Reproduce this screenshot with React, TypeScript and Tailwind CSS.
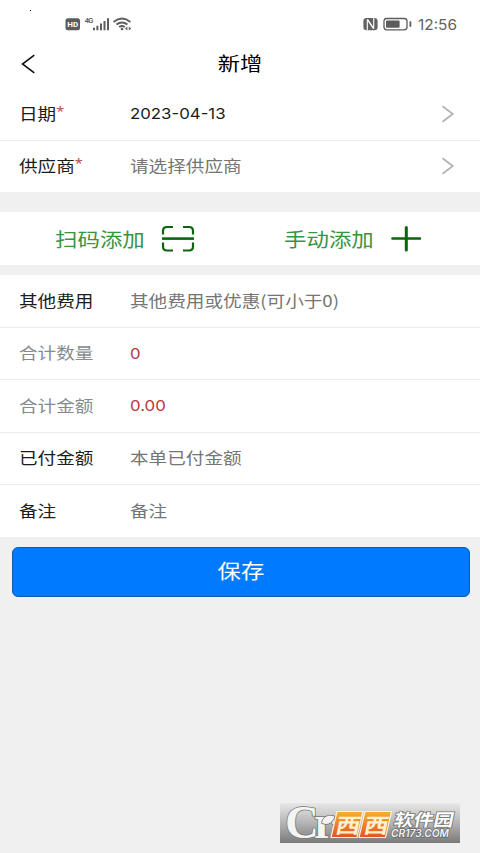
import React from "react";

interface FieldRowProps {
  label: string;
  value: string;
  required?: boolean;
  arrow?: boolean;
  muted?: boolean;
  last?: boolean;
  latin?: boolean;
  valueClass?: string;
}

const ChevronIcon: React.FC = () => (
  <svg width="14" height="18" viewBox="0 0 14 18" fill="none">
    <path d="M1.5 1.2L11.8 9L1.5 16.8" stroke="#b4b4b4" strokeWidth="1.8" />
  </svg>
);

const FieldRow: React.FC<FieldRowProps> = ({
  label,
  value,
  required,
  arrow,
  muted,
  last,
  latin,
  valueClass = "text-[#757575]",
}) => (
  <div
    className={`flex items-center bg-white pl-[19px] pr-[25px] ${
      last ? "h-[51.5px]" : "h-[52.5px] border-b border-[#ebebeb]"
    }`}
  >
    <div className="w-[110.5px] shrink-0 pb-[2px]">
      <span
        className={`flex w-max origin-left scale-x-[1.163] whitespace-nowrap text-[16px] leading-6 ${
          muted ? "text-[#848b8f]" : "text-[#1c1c1c]"
        }`}
      >
        {label}
        {required && (
          <span className="font-['Noto_Sans',sans-serif] text-[12.5px] leading-[22px] text-[#b94a48]">
            *
          </span>
        )}
      </span>
    </div>
    <div className={latin ? "flex-1 pt-px" : "flex-1 pb-[2px]"}>
      <span
        className={`block w-max origin-left whitespace-nowrap leading-6 ${
          latin
            ? "scale-x-[1.12] font-['Inter',sans-serif] text-[15px]"
            : "scale-x-[1.163] text-[16px]"
        } ${valueClass}`}
      >
        {value}
      </span>
    </div>
    {arrow && <ChevronIcon />}
  </div>
);

const StatusBar: React.FC = () => (
  <div className="relative flex h-[40px] items-center justify-between pl-[65px] pr-[23px] pt-[8px]">
    <span className="absolute left-[30px] top-[10px] h-px w-px bg-black" />
    <svg width="68" height="18" viewBox="0 0 68 18" fill="none">
      <rect x="0.5" y="3.2" width="14.5" height="12" rx="2.5" fill="#5c5c5c" />
      <text x="2.2" y="12" fontSize="8" fontWeight="700" fill="#fff" fontFamily="Roboto, sans-serif" textLength="11">
        HD
      </text>
      <text x="19.8" y="8" fontSize="7.5" fontWeight="600" fill="#5c5c5c" fontFamily="Roboto, sans-serif" textLength="8.5">
        4G
      </text>
      <path d="M29 12.8v2.5M32.4 10.8V15.3M36 8.5V15.3M39.5 6.1V15.3M43 3.3V15.3" stroke="#5c5c5c" strokeWidth="2" />
      <g stroke="#5c5c5c" strokeWidth="1.9">
        <path d="M48.5 6.9Q57 .2 65.4 6.9" />
        <path d="M51.4 9.6Q57 5.3 62.4 9.6" />
        <path d="M54.2 12.1Q57 9.9 59.8 12.1" />
      </g>
      <circle cx="57" cy="14" r="1.3" fill="#5c5c5c" />
      <path d="M60 13.6l2.4-2v4zM66.2 13.6l-2.4-2v4z" fill="#5c5c5c" />
    </svg>
    <div className="flex items-center">
      <svg width="50" height="18" viewBox="0 0 50 18" fill="none">
        <rect x="0.4" y="3" width="14.2" height="12.2" rx="3.2" fill="#636363" />
        <path d="M4.3 15.2V5M10.7 3V13.4" stroke="#fff" strokeWidth="1.1" />
        <path d="M4.3 4.4L10.7 13.6" stroke="#fff" strokeWidth="1.5" />
        <rect x="21" y="3.5" width="23" height="11.3" rx="2.8" stroke="#5c5c5c" strokeWidth="1.3" />
        <rect x="23" y="5.5" width="13.6" height="7.3" rx="1" fill="#5c5c5c" />
        <path d="M47.4 6.3v5.5" stroke="#5c5c5c" strokeWidth="1.8" />
      </svg>
      <span className="ml-[5px] mt-px inline-block w-[39px] origin-left scale-x-[1.1] whitespace-nowrap font-['Inter',sans-serif] text-[14px] leading-5 text-[#626262]">
        12:56
      </span>
    </div>
  </div>
);

const NavBar: React.FC = () => (
  <div className="grid h-[48px] grid-cols-3 items-center">
    <svg className="ml-[21px]" width="15" height="20" viewBox="0 0 15 20" fill="none">
      <path d="M13.3 1.2L1.5 10L13.3 18.8" stroke="#111" strokeWidth="1.6" />
    </svg>
    <h1 className="pb-[2px] text-center text-[19px] font-normal leading-7 text-black">
      <span className="inline-block scale-x-[1.17]">新增</span>
    </h1>
  </div>
);

const AddActions: React.FC = () => (
  <div className="flex h-[53px] bg-white">
    <button className="flex w-[250px] items-center pl-[55px]">
      <span className="w-[106px] text-left">
        <span className="inline-block origin-left scale-x-[1.17] whitespace-nowrap text-[19.2px] leading-7 text-[#38953f]">
          扫码添加
        </span>
      </span>
      <svg width="34" height="28" viewBox="0 0 34 28" fill="none">
        <g stroke="#0a650c" strokeWidth="2.2">
          <path d="M2 9.5V6Q2 2 6 2H12" />
          <path d="M22 2h6Q32 2 32 6V9.5" />
          <path d="M2 17.5V21.5Q2 25.5 6 25.5H12" />
          <path d="M22 25.5h6Q32 25.5 32 21.5V17.5" />
          <path d="M1 13.6H33" strokeWidth="2.6" />
        </g>
      </svg>
    </button>
    <button className="flex flex-1 items-center pl-[34px]">
      <span className="w-[107px] text-left">
        <span className="inline-block origin-left scale-x-[1.17] whitespace-nowrap text-[19.2px] leading-7 text-[#38953f]">
          手动添加
        </span>
      </span>
      <svg width="30" height="26" viewBox="0 0 30 26" fill="none">
        <path d="M1.5 12.5H29" stroke="#0a650c" strokeWidth="2.6" strokeLinecap="round" />
        <path d="M15.3 1.5V24" stroke="#0a650c" strokeWidth="3" strokeLinecap="round" />
      </svg>
    </button>
  </div>
);

const SiteBadge: React.FC = () => (
  <svg className="absolute bottom-[10px] left-[280px] overflow-visible" width="180" height="40" viewBox="0 0 180 40">
    <defs>
      <linearGradient id="plate" x1="0" y1="0" x2="0" y2="1">
        <stop offset="0" stopColor="#e8e8e8" />
        <stop offset="0.5" stopColor="#b4b4b4" />
        <stop offset="1" stopColor="#7a7a7a" />
      </linearGradient>
      <linearGradient id="tile" x1="0" y1="0" x2="0" y2="1">
        <stop offset="0" stopColor="#f5b030" />
        <stop offset="1" stopColor="#e65220" />
      </linearGradient>
    </defs>
    <rect width="180" height="40" fill="url(#plate)" />
    <g fill="#f4f4f4" stroke="#777" strokeWidth="1.6" paintOrder="stroke">
      <text x="5" y="35" fontSize="47" fontWeight="700" fontFamily="'Liberation Serif', serif" letterSpacing="-5">
        Cr
      </text>
      <path d="M42 20C43 14 48 11.5 54.5 13.5C52 20 48 22.5 42 20Z" />
    </g>
    <g fill="url(#tile)" stroke="#f8f1e4" strokeWidth="1.2">
      <path d="M57 8.5H83L77 34.5H51Z" />
      <path d="M85 8.5H111.5L105.5 34.5H79Z" />
    </g>
    <g fontFamily="'Noto Sans CJK SC', sans-serif" fontWeight="700">
      <g transform="translate(54.5 29.5) skewX(-12) scale(1.2 1)" fill="#fff0cf">
        <text x="0" y="0" fontSize="20.5" letterSpacing="3">
          西西
        </text>
      </g>
      <g transform="translate(113 23) skewX(-12) scale(1.17 1)">
        <text x="0" y="0" fontSize="17" fill="#fff" stroke="#777" strokeWidth="1.6" paintOrder="stroke">
          软件园
        </text>
      </g>
    </g>
    <text
      x="111"
      y="34"
      fontSize="10"
      fontStyle="italic"
      fontWeight="600"
      fontFamily="Inter, sans-serif"
      fill="#f4f4f4"
      stroke="#666"
      strokeWidth="1.4"
      paintOrder="stroke"
      textLength="58"
      lengthAdjust="spacingAndGlyphs"
    >
      CR173.COM
    </text>
  </svg>
);

export default function App() {
  return (
    <div
      lang="zh-CN"
      className="relative flex h-[853px] w-[480px] flex-col overflow-hidden bg-[#f0f0f0] font-['Noto_Sans_CJK_SC',sans-serif]"
    >
      {/* Header */}
      <header className="bg-white">
        <StatusBar />
        <NavBar />
      </header>

      {/* Order info */}
      <section>
        <FieldRow label="日期" value="2023-04-13" required arrow latin valueClass="text-[#1c1c1c]" />
        <FieldRow label="供应商" value="请选择供应商" required arrow last />
      </section>

      <section className="mt-[20px]">
        <AddActions />
      </section>

      {/* Totals */}
      <section className="mt-[9.5px] bg-white pt-[0.5px]">
        <FieldRow label="其他费用" value="其他费用或优惠(可小于0)" />
        <FieldRow label="合计数量" value="0" muted latin valueClass="text-[#b5393c]" />
        <FieldRow label="合计金额" value="0.00" muted latin valueClass="text-[#b5393c]" />
        <FieldRow label="已付金额" value="本单已付金额" />
        <FieldRow label="备注" value="备注" last />
      </section>

      <button className="ml-[12px] mt-[10.5px] flex h-[50px] w-[457.5px] shrink-0 items-center justify-center rounded-[6px] border border-[#0a5cb5] bg-[#007aff] pb-[2px] text-[20px] text-white">
        <span className="inline-block scale-x-[1.17]">保存</span>
      </button>

      <SiteBadge />
    </div>
  );
}
